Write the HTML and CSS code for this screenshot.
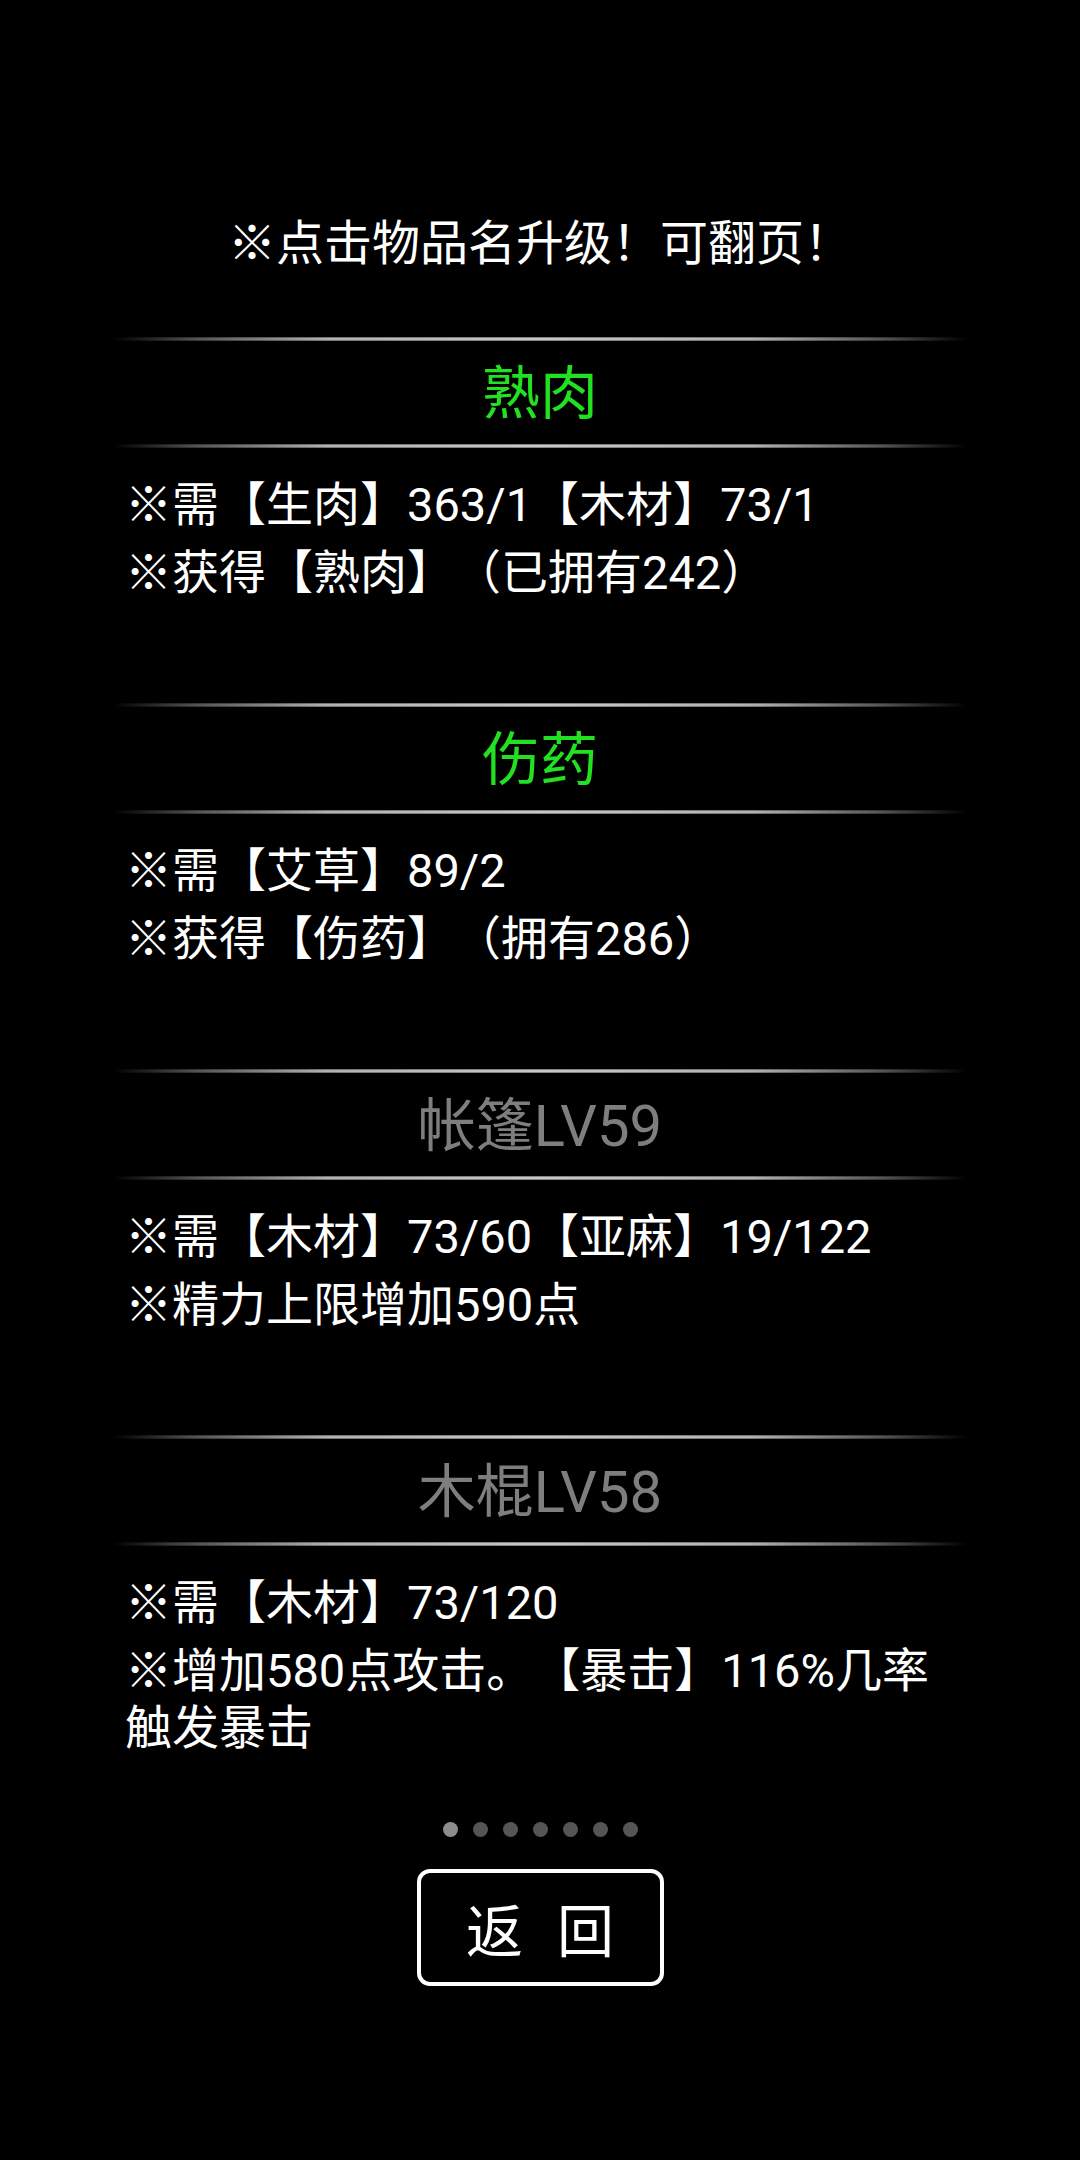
FILE: index.html
```html
<!DOCTYPE html>
<html lang="zh-CN">
<head>
<meta charset="utf-8">
<title>制作</title>
<link rel="stylesheet" href="styles.css">
</head>
<body>
<div class="page">
  <div class="notice">※点击物品名升级！可翻页！</div>

  <section class="item">
    <div class="divider"></div>
    <div class="title title-green">熟肉</div>
    <div class="divider"></div>
    <div class="desc">
      <p>※需【生肉】363/1【木材】73/1</p>
      <p>※获得【熟肉】（已拥有242）</p>
    </div>
  </section>

  <section class="item">
    <div class="divider"></div>
    <div class="title title-green">伤药</div>
    <div class="divider"></div>
    <div class="desc">
      <p>※需【艾草】89/2</p>
      <p>※获得【伤药】（拥有286）</p>
    </div>
  </section>

  <section class="item">
    <div class="divider"></div>
    <div class="title title-grey">帐篷LV59</div>
    <div class="divider"></div>
    <div class="desc">
      <p>※需【木材】73/60【亚麻】19/122</p>
      <p>※精力上限增加590点</p>
    </div>
  </section>

  <section class="item item-last">
    <div class="divider"></div>
    <div class="title title-grey">木棍LV58</div>
    <div class="divider"></div>
    <div class="desc">
      <p>※需【木材】73/120</p>
      <p>※增加580点攻击。【暴击】116%几率触发暴击</p>
    </div>
  </section>

  <div class="dots">
    <span class="dot active"></span>
    <span class="dot"></span>
    <span class="dot"></span>
    <span class="dot"></span>
    <span class="dot"></span>
    <span class="dot"></span>
    <span class="dot"></span>
  </div>

  <div class="actions">
    <button class="back"><span>返</span><span>回</span></button>
  </div>
</div>
</body>
</html>
```

FILE: styles.css
```css
html, body {
  margin: 0;
  padding: 0;
  background: #000;
}

body {
  width: 1080px;
  height: 2160px;
  overflow: hidden;
  color: #fff;
  font-family: Roboto, "Noto Sans CJK SC", sans-serif;
  text-spacing-trim: space-all;
}

.page {
  display: flex;
  flex-direction: column;
}

.notice {
  padding-top: 213px;
  height: 62px;
  line-height: 62px;
  padding-bottom: 62px;
  text-align: center;
  font-size: 48px;
  color: #fff;
}

.item {
  height: 366px;
  margin: 0 113px;
  display: flex;
  flex-direction: column;
}

.item-last {
  height: auto;
}

.divider {
  height: 4px;
  flex: none;
  background:
    linear-gradient(to bottom, rgba(0,0,0,0.55), rgba(0,0,0,0) 45%, rgba(0,0,0,0) 55%, rgba(0,0,0,0.55)),
    linear-gradient(to right, rgba(170,170,170,0) 0%, rgba(170,170,170,0.55) 10%, rgba(205,205,205,0.95) 25%, #dcdcdc 50%, rgba(205,205,205,0.95) 75%, rgba(170,170,170,0.55) 90%, rgba(170,170,170,0) 100%);
}

.title {
  height: 99px;
  padding-top: 4px;
  line-height: 99px;
  text-align: center;
  font-size: 58px;
}

.title-green {
  color: #22e022;
}

.title-grey {
  color: #7e7e7e;
}

.desc {
  padding: 28px 16px 0 12px;
  font-size: 47px;
  line-height: 57px;
}

.desc p {
  margin: 0 0 11px 0;
}

.desc p:last-child {
  margin-bottom: 0;
}

.dots {
  margin-top: 66px;
  height: 15px;
  display: flex;
  justify-content: center;
  gap: 15px;
}

.dot {
  width: 15px;
  height: 15px;
  border-radius: 50%;
  background: #555;
}

.dot.active {
  background: #8c8c8c;
}

.actions {
  margin-top: 32px;
  display: flex;
  justify-content: center;
}

.back {
  width: 247px;
  height: 117px;
  box-sizing: border-box;
  border: 4px solid #fff;
  border-radius: 13px;
  background: #000;
  color: #fff;
  font-family: "Noto Sans CJK SC", sans-serif;
  font-size: 57px;
  line-height: 1;
  padding: 0;
  display: flex;
  align-items: center;
  justify-content: center;
  gap: 34px;
  cursor: pointer;
}
```
